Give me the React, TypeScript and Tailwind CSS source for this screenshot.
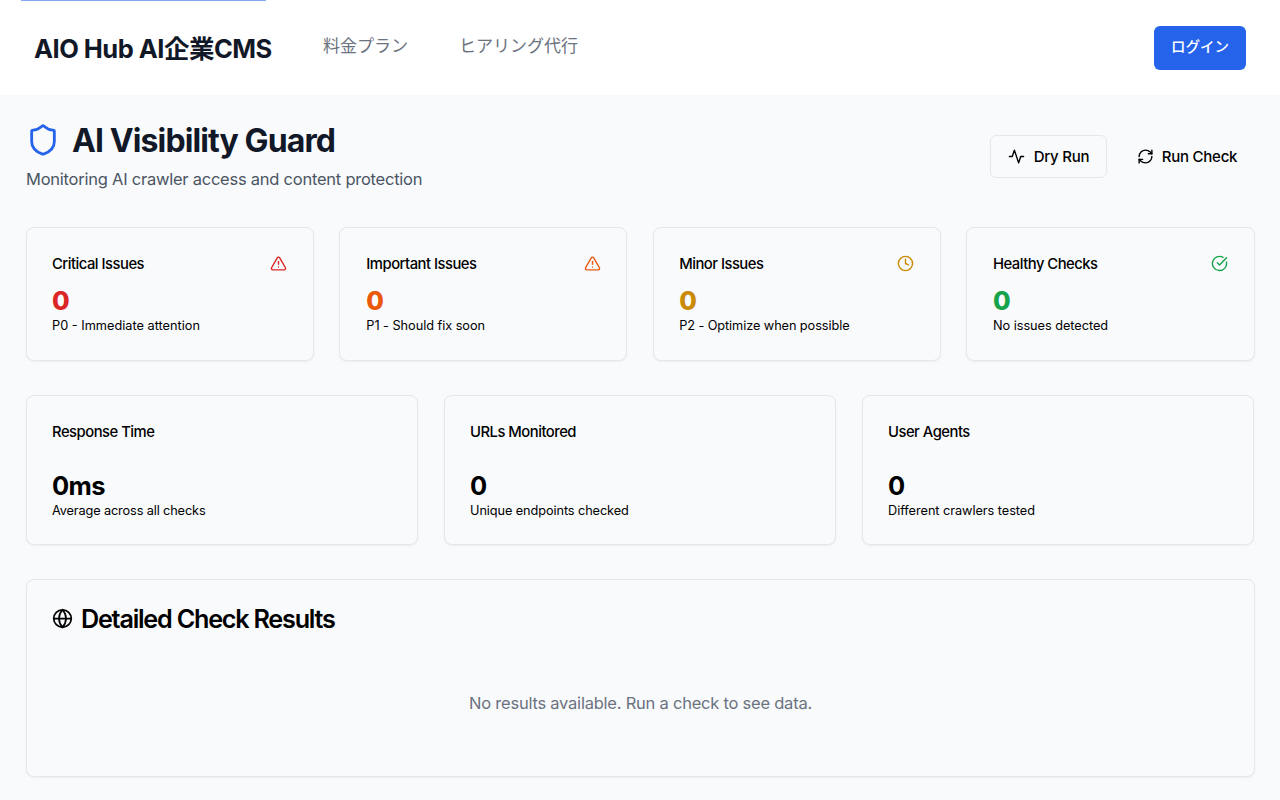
import React from "react";
import { Shield, RefreshCw, TriangleAlert, Clock, CircleCheckBig } from "lucide-react";

const issues = [
  { title: "Critical Issues", note: "P0 - Immediate attention", color: "text-[#dc2626]", spacing: "px-[25px]", noteSpacing: "", Icon: TriangleAlert },
  { title: "Important Issues", note: "P1 - Should fix soon", color: "text-[#ea580c]", spacing: "pl-[26px] pr-[24px]", noteSpacing: "tracking-[-0.05px]", Icon: TriangleAlert },
  { title: "Minor Issues", note: "P2 - Optimize when possible", color: "text-[#ca8a04]", spacing: "pl-[25.5px] pr-[25px]", noteSpacing: "tracking-[-0.09px]", Icon: Clock },
  { title: "Healthy Checks", note: "No issues detected", color: "text-[#16a34a]", spacing: "pl-[26px] pr-[25px]", noteSpacing: "tracking-[-0.05px]", Icon: CircleCheckBig },
];

const metrics = [
  { title: "Response Time", value: "0ms", note: "Average across all checks", noteSpacing: "tracking-[-0.14px]" },
  { title: "URLs Monitored", value: "0", note: "Unique endpoints checked", noteSpacing: "tracking-[-0.1px]" },
  { title: "User Agents", value: "0", note: "Different crawlers tested", noteSpacing: "tracking-[-0.06px]" },
];

const card = "rounded-lg border border-[#e5e7eb] bg-[#f9fafc] shadow-xs";

function PulseIcon() {
  return (
    <svg className="size-[17px]" viewBox="0 0 24 24" fill="none" stroke="currentColor" strokeWidth="2" strokeLinecap="round" strokeLinejoin="round">
      <path d="M22 12h-4l-3 9L9 3l-3 9H2" />
    </svg>
  );
}

function GlobeIcon() {
  return (
    <svg className="size-[21px]" viewBox="0 0 24 24" fill="none" stroke="currentColor" strokeWidth="2" strokeLinecap="round" strokeLinejoin="round">
      <circle cx="12" cy="12" r="10" />
      <path d="M2 12h20" />
      <path d="M12 2a15.3 15.3 0 0 1 4 10 15.3 15.3 0 0 1-4 10 15.3 15.3 0 0 1-4-10 15.3 15.3 0 0 1 4-10z" />
    </svg>
  );
}

export default function App() {
  return (
    <div className="h-[800px] overflow-hidden bg-[#f9fafc] font-[Inter,'Noto_Sans_CJK_JP',sans-serif] text-black">
      <header className="relative flex h-[95px] items-center bg-white px-[34px]">
        <div className="absolute left-[21px] top-0 h-px w-[245px] bg-[#84a9f4]" />
        <div className="w-[289px] whitespace-nowrap pt-[2px] text-[25.5px] font-bold leading-9 tracking-[-0.52px] text-[#111827]">AIO Hub AI企業CMS</div>
        <nav className="flex gap-[51px] pb-[3px] text-[17px] leading-[26px] text-[#6b7280]">
          <span>料金プラン</span>
          <span>ヒアリング代行</span>
        </nav>
        <button className="ml-auto h-11 w-[92px] rounded-md bg-[#2563eb] pb-px text-[14.5px] font-medium text-white">ログイン</button>
      </header>
      <main className="px-[26px] pt-[25px]">
        <div className="flex h-[73px] justify-between">
          <div>
            <h1 className="flex h-[41px] items-center gap-3 text-[32px] font-bold tracking-[-0.89px] text-[#111827]">
              <Shield className="mb-[2px] size-[34px] text-[#2563eb]" /><span className="pt-px">AI Visibility Guard</span>
            </h1>
            <p className="mt-[5px] text-[16.5px] leading-[27px] tracking-[-0.24px] text-[#4b5563]">Monitoring AI crawler access and content protection</p>
          </div>
          <div className="mt-[15px] flex gap-[13px] text-[15px] font-medium tracking-[-0.25px]">
            <button className="flex h-[43px] w-[117px] items-center justify-center gap-[9px] rounded-md border border-[#e5e7eb]"><PulseIcon /><span className="pt-px">Dry Run</span></button>
            <button className="flex h-[43px] w-[134px] items-center justify-center gap-[8px]"><RefreshCw className="size-[17px]" /><span className="pt-px">Run Check</span></button>
          </div>
        </div>
        <section className="mt-[34px] grid w-[1229px] grid-cols-[288px_288px_288px_289px] justify-between">
          {issues.map(({ title, note, color, spacing, noteSpacing, Icon }) => (
            <div key={title} className={`${card} ${spacing} h-[134px] pt-[25px]`}>
              <div className="flex h-[22px] items-center justify-between text-[14.8px] font-medium tracking-[-0.5px]">{title}<Icon className={`mb-px mr-px size-[17px] ${color}`} /></div>
              <div className={`mt-[9px] text-[25.5px] font-extrabold leading-[34px] ${color}`}>0</div>
              <p className={`-mt-px text-[12.75px] leading-[17px] ${noteSpacing}`}>{note}</p>
            </div>
          ))}
        </section>
        <section className="mt-[34px] grid grid-cols-3 gap-[26px]">
          {metrics.map(({ title, value, note, noteSpacing }) => (
            <div key={title} className={`${card} h-[150px] px-[25px] pt-[25px]`}>
              <div className="text-[14.8px] font-medium leading-[22px] tracking-[-0.5px]">{title}</div>
              <div className="mt-[26px] text-[25.5px] font-bold leading-[34px] tracking-[-0.6px]">{value}</div>
              <p className={`-mt-px text-[12.75px] leading-[17px] ${noteSpacing}`}>{note}</p>
            </div>
          ))}
        </section>
        <section className={`${card} mt-[34px] h-[198px] w-[1229px] px-[25px] pt-[25px]`}>
          <h2 className="flex h-7 items-center gap-[8px] text-[25.2px] font-semibold tracking-[-1.23px]"><span className="mb-[2px]"><GlobeIcon /></span><span className="pt-px">Detailed Check Results</span></h2>
          <p className="mt-[57px] text-center text-[16.5px] leading-[27px] tracking-[-0.23px] text-[#6b7280]">No results available. Run a check to see data.</p>
        </section>
      </main>
    </div>
  );
}
